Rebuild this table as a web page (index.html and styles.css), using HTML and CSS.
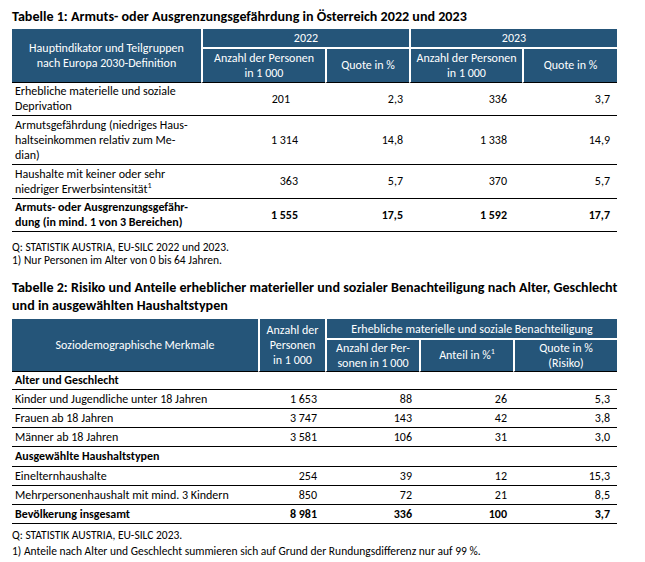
FILE: index.html
```html
<!DOCTYPE html>
<html lang="de">
<head>
<meta charset="utf-8">
<link rel="stylesheet" href="styles.css">
</head>
<body>
<div class="page">
  <h2 class="title t1title">Tabelle 1: Armuts- oder Ausgrenzungsgefährdung in Österreich 2022 und 2023</h2>
  <table class="tbl t1">
    <colgroup>
      <col style="width:189px"><col style="width:124px"><col style="width:84px"><col style="width:113px"><col style="width:95px">
    </colgroup>
    <thead>
      <tr class="h1">
        <th rowspan="2" class="first">Hauptindikator und Teilgruppen<br>nach Europa 2030-Definition</th>
        <th colspan="2" class="grp">2022</th>
        <th colspan="2" class="grp">2023</th>
      </tr>
      <tr class="h2">
        <th>Anzahl der Personen<br>in 1 000</th>
        <th>Quote in %</th>
        <th>Anzahl der Personen<br>in 1 000</th>
        <th>Quote in %</th>
      </tr>
    </thead>
    <tbody>
      <tr class="ra">
        <td class="lbl">Erhebliche materielle und soziale<br>Deprivation</td>
        <td class="n a22 shift">201</td><td class="n q22">2,3</td><td class="n a23">336</td><td class="n q23">3,7</td>
      </tr>
      <tr class="rb">
        <td class="lbl">Armutsgefährdung (niedriges Haus-<br>haltseinkommen relativ zum Me-<br>dian)</td>
        <td class="n a22">1 314</td><td class="n q22">14,8</td><td class="n a23">1 338</td><td class="n q23">14,9</td>
      </tr>
      <tr class="rc">
        <td class="lbl">Haushalte mit keiner oder sehr<br>niedriger Erwerbsintensität<sup>1</sup></td>
        <td class="n a22">363</td><td class="n q22">5,7</td><td class="n a23">370</td><td class="n q23">5,7</td>
      </tr>
      <tr class="ra bold">
        <td class="lbl">Armuts- oder Ausgrenzungsgefähr-<br>dung (in mind. 1 von 3 Bereichen)</td>
        <td class="n a22">1 555</td><td class="n q22">17,5</td><td class="n a23">1 592</td><td class="n q23">17,7</td>
      </tr>
    </tbody>
  </table>
  <div class="notes n1">
    <p>Q: STATISTIK AUSTRIA, EU-SILC 2022 und 2023.</p>
    <p>1) Nur Personen im Alter von 0 bis 64 Jahren.</p>
  </div>

  <h2 class="title t2title">Tabelle 2: Risiko und Anteile erheblicher materieller und sozialer Benachteiligung nach Alter, Geschlecht<br>und in ausgewählten Haushaltstypen</h2>
  <table class="tbl t2">
    <colgroup>
      <col style="width:246px"><col style="width:67px"><col style="width:94px"><col style="width:94px"><col style="width:104px">
    </colgroup>
    <thead>
      <tr class="h1">
        <th rowspan="2" class="first">Soziodemographische Merkmale</th>
        <th rowspan="2">Anzahl der<br>Personen<br>in 1 000</th>
        <th colspan="3" class="grp">Erhebliche materielle und soziale Benachteiligung</th>
      </tr>
      <tr class="h2">
        <th>Anzahl der Per-<br>sonen in 1 000</th>
        <th>Anteil in %<sup>1</sup></th>
        <th>Quote in %<br>(Risiko)</th>
      </tr>
    </thead>
    <tbody>
      <tr class="sec first-sec"><td colspan="5" class="lbl">Alter und Geschlecht</td></tr>
      <tr><td class="lbl">Kinder und Jugendliche unter 18 Jahren</td><td class="n c2">1 653</td><td class="n c3">88</td><td class="n c4">26</td><td class="n c5">5,3</td></tr>
      <tr><td class="lbl">Frauen ab 18 Jahren</td><td class="n c2">3 747</td><td class="n c3">143</td><td class="n c4">42</td><td class="n c5">3,8</td></tr>
      <tr><td class="lbl">Männer ab 18 Jahren</td><td class="n c2">3 581</td><td class="n c3">106</td><td class="n c4">31</td><td class="n c5">3,0</td></tr>
      <tr class="sec second-sec"><td colspan="5" class="lbl">Ausgewählte Haushaltstypen</td></tr>
      <tr><td class="lbl">Einelternhaushalte</td><td class="n c2">254</td><td class="n c3">39</td><td class="n c4">12</td><td class="n c5">15,3</td></tr>
      <tr><td class="lbl">Mehrpersonenhaushalt mit mind. 3 Kindern</td><td class="n c2">850</td><td class="n c3">72</td><td class="n c4">21</td><td class="n c5">8,5</td></tr>
      <tr class="bold"><td class="lbl">Bevölkerung insgesamt</td><td class="n c2">8 981</td><td class="n c3">336</td><td class="n c4">100</td><td class="n c5">3,7</td></tr>
    </tbody>
  </table>
  <div class="notes n2">
    <p>Q: STATISTIK AUSTRIA, EU-SILC 2023.</p>
    <p>1) Anteile nach Alter und Geschlecht summieren sich auf Grund der Rundungsdifferenz nur auf 99 %.</p>
  </div>
</div>
</body>
</html>
```

FILE: styles.css
```css
* { box-sizing: border-box; }
html, body { margin: 0; padding: 0; background: #fff; }
body {
  font-family: Carlito, Lato, "Liberation Sans", sans-serif;
  color: #000;
}
.page { padding: 8px 0 0 12px; width: 645px; }
.title {
  margin: 0;
  font-size: 14.1px;
  line-height: 18px;
  font-weight: bold;
  white-space: nowrap;
}
.t1title { height: 21px; }
.t2title { margin: 13px 0 4px; height: 36px; }
.tbl {
  border-collapse: separate;
  border-spacing: 0;
  table-layout: fixed;
  width: 605px;
  font-size: 12px;
  line-height: 15px;
}
.tbl th {
  background: #255579;
  color: #fff;
  font-weight: normal;
  text-align: center;
  vertical-align: middle;
  padding: 0 2px;
  border-left: 2px solid #fff;
}
.tbl th.first { border-left: none; }
.tbl th.grp { border-bottom: 2px solid #fff; padding-top: 1px; }
.tbl .h2 th, .tbl th[rowspan] { border-bottom: 1px solid #000; }
.t1 th.grp { height: 20px; }
.t1 .h2 th { height: 34px; }
.t2 th.grp { height: 21px; }
.t2 .h2 th { height: 32px; }
.tbl sup {
  font-size: 8px;
  line-height: 0;
  vertical-align: baseline;
  position: relative;
  top: -5px;
}
.tbl td {
  padding: 0 3px;
  border-bottom: 1px solid #000;
  vertical-align: middle;
}
.tbl td.lbl { text-align: left; }
.tbl td.n { text-align: right; }
.t1 .ra td { height: 33px; }
.t1 .rb td { height: 49px; }
.t1 .rc td { height: 34px; }
.t1 td.a22 { padding-right: 27px; }
.t1 td.a22.shift { padding-right: 35px; }
.t1 td.q22 { padding-right: 6px; }
.t1 td.a23 { padding-right: 15px; }
.t1 td.q23 { padding-right: 7px; }
.bold td { font-weight: bold; }
.t2 td { height: 19px; }
.t2 .sec td { font-weight: bold; }
.t2 .first-sec td { height: 18px; }
.t2 .second-sec td { height: 20px; }
.t2 td.c2 { padding-right: 8px; }
.t2 td.c3 { padding-right: 7px; }
.t2 td.c4 { padding-right: 6px; }
.t2 td.c5 { padding-right: 7px; }
.notes { font-size: 11.5px; }
.notes p { margin: 0; }
.n1 { padding-top: 9px; line-height: 13px; height: 34px; }
.n2 { padding-top: 3px; line-height: 16px; }
```
